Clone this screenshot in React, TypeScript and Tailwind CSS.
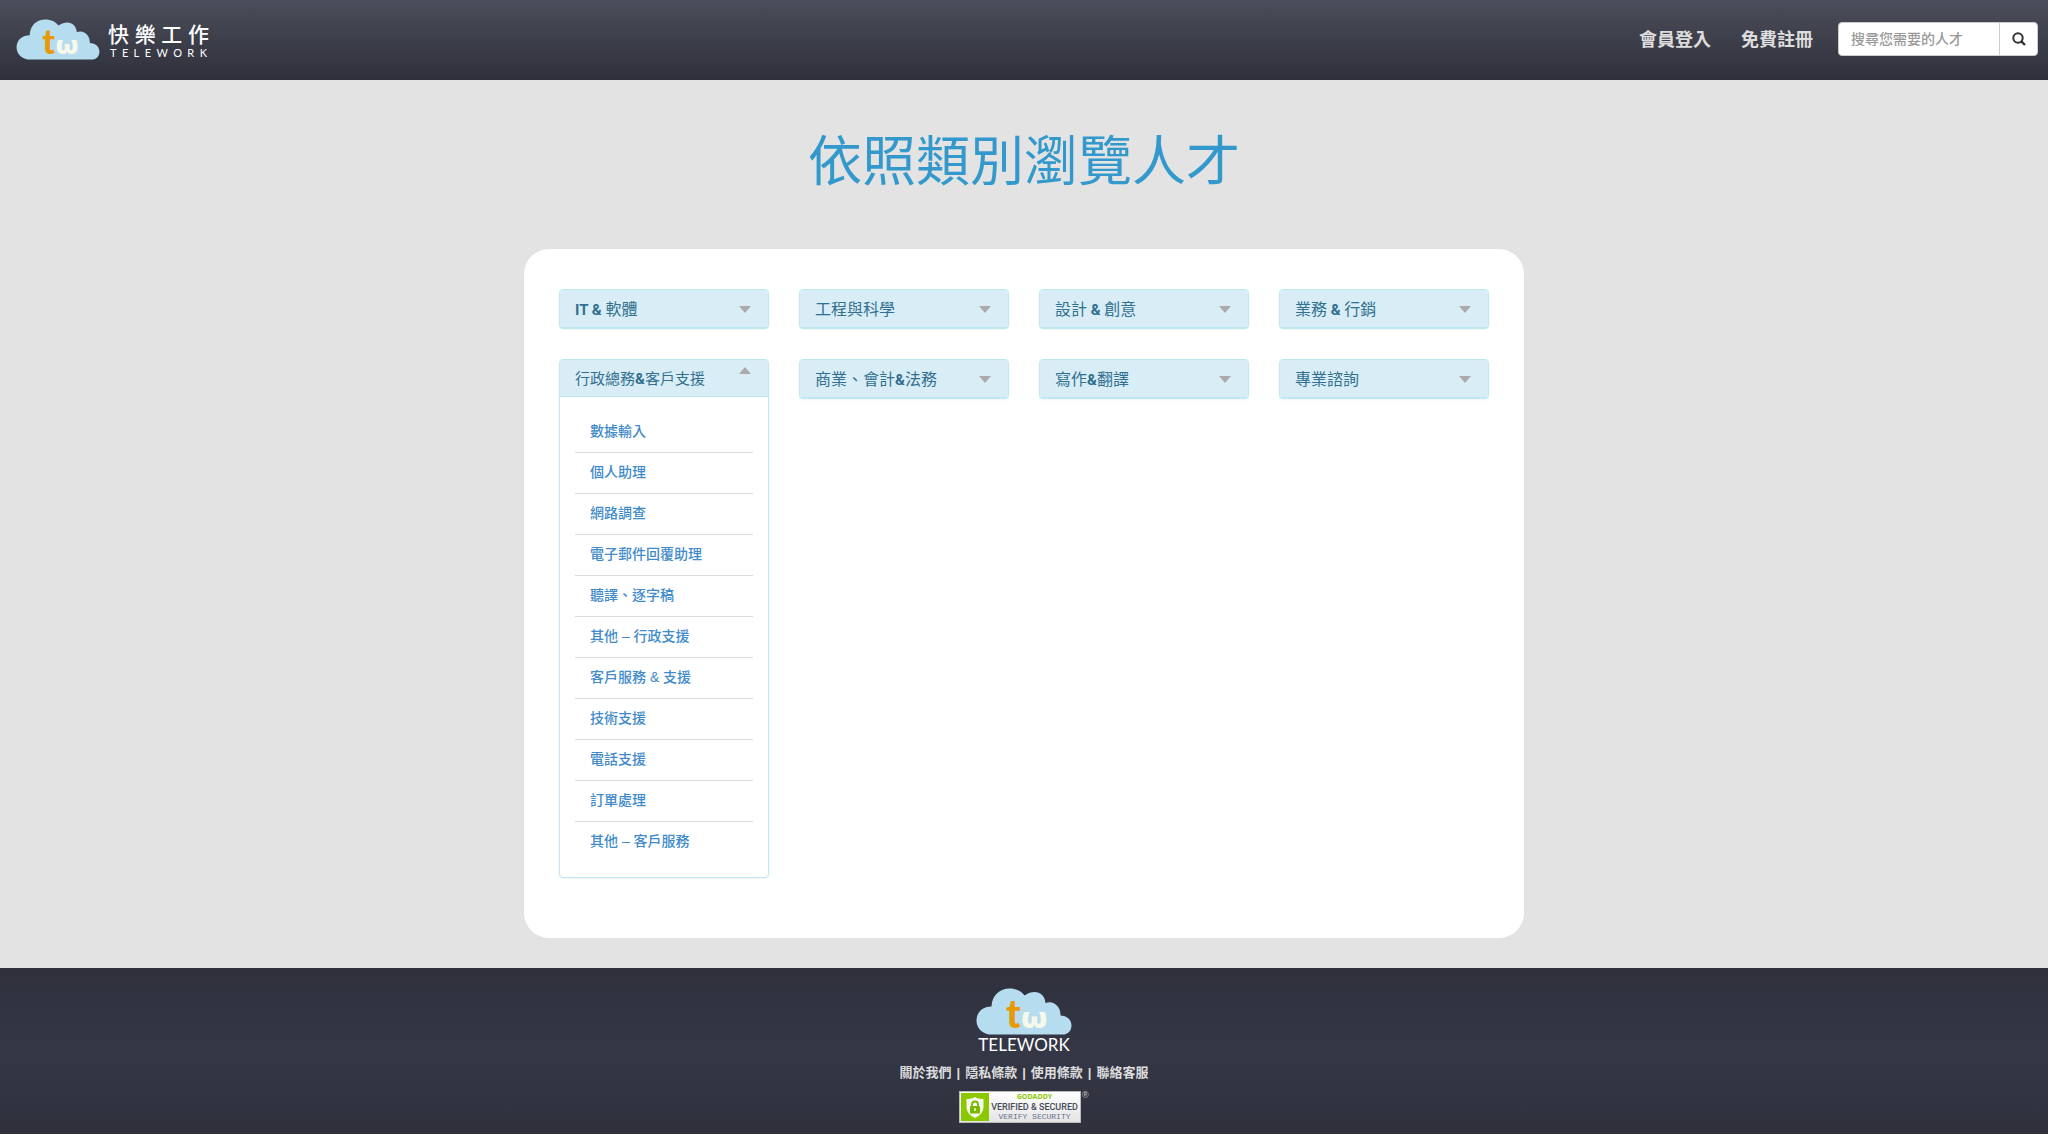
import { useState } from "react";

const font = "font-['Liberation_Sans','Noto_Sans_CJK_TC',sans-serif]";

const supportLinks = [
  "數據輸入", "個人助理", "網路調查", "電子郵件回覆助理", "聽譯、逐字稿", "其他 – 行政支援",
  "客戶服務 & 支援", "技術支援", "電話支援", "訂單處理", "其他 – 客戶服務",
];

const categories: { title: string; links: string[] }[] = [
  { title: "IT & 軟體", links: [] },
  { title: "工程與科學", links: [] },
  { title: "設計 & 創意", links: [] },
  { title: "業務 & 行銷", links: [] },
  { title: "行政總務&客戶支援", links: supportLinks },
  { title: "商業、會計&法務", links: [] },
  { title: "寫作&翻譯", links: [] },
  { title: "專業諮詢", links: [] },
];

function Cloud({ className }: { className: string }) {
  return (
    <svg viewBox="0 0 96 47" className={`overflow-visible ${className}`} role="img" aria-label="Telework">
      <path
        d="M13 46.500C5 45 0.500 39 0.500 32.500C0.500 24 7 18.500 15.500 18.500C16 7 24 0.500 33.500 0.500C40 0.500 45.500 3 48.500 7.500C59 0 69 5 69.500 15C78 12 85 19 84.500 27.500C91 27.500 95.500 32 95.500 37.500C95.500 42.500 92 46 88 46.500Z"
        fill="#b6dcf0"
      />
      <g fontWeight="900">
        <text x="30" y="40" fontSize="39" fill="#e89a06" fontFamily="Lato, sans-serif">t</text>
        <text x="45" y="40" fontSize="29" fill="#f6f9ea" fontFamily="'Open Sans', sans-serif">ω</text>
      </g>
    </svg>
  );
}

function Title({ text }: { text: string }) {
  return (
    <span className="leading-6">
      {text.split(/([A-Z& ]+)/).map((run, i) =>
        i % 2 ? <span key={i} className="font-[Roboto] text-[15px] font-bold">{run}</span> : run,
      )}
    </span>
  );
}

function CategoryPanel({ title, links, initiallyOpen }: { title: string; links: string[]; initiallyOpen: boolean }) {
  const [open, setOpen] = useState(initiallyOpen);
  return (
    <section className="overflow-hidden rounded border border-[#bce8f1] bg-white shadow-xs">
      <h2>
        <button
          type="button"
          aria-expanded={open}
          onClick={() => setOpen(!open)}
          className={`flex w-full justify-between border-b border-[#bce8f1] bg-[#d9edf7] pr-[17px] pl-[15px] whitespace-pre text-[#31708f] ${open ? "h-[37px] items-start pt-[7px] text-[15px]" : "h-[38px] items-center pt-0.5 text-base"}`}
        >
          <Title text={title} />
          <svg viewBox="0 0 12 7" className="h-[7px] w-3" aria-hidden="true">
            <path d={open ? "M0 7L6 0L12 7Z" : "M0 0H12L6 7Z"} fill="#aaa" />
          </svg>
        </button>
      </h2>
      {open && (
        <ul className="divide-y divide-[#ddd] p-[15px]">
          {links.map((link) => (
            <li key={link} className="px-[15px] pt-[9px] pb-[11px] text-sm leading-5 font-medium">
              <a href="#" className="text-[#428bca]">{link}</a>
            </li>
          ))}
        </ul>
      )}
    </section>
  );
}

function SecurityBadge() {
  return (
    <a href="#" className="mt-2 flex items-start" aria-label="GoDaddy Verified &amp; Secured, verify security">
      <span className="flex h-8 w-[122px] items-center border border-[#bbb] bg-linear-to-b from-white to-[#e4e4e4] pl-px">
        <svg viewBox="0 0 28 28" className="h-7 w-7" aria-hidden="true">
          <rect width="28" height="28" fill="#8cc800" />
          <path d="M14 4C11.500 5.500 9 6 5.500 6V14C5.500 19 9 22.500 14 25C19 22.500 22.500 19 22.500 14V6C19 6 16.500 5.500 14 4Z" fill="#f4f8ee" />
          <path d="M11 13V11.500A3 3 0 0 1 17 11.500V13" fill="none" stroke="#7ab800" strokeWidth="1.800" />
          <rect x="9" y="13" width="10" height="7.500" rx="1" fill="#7ab800" />
          <path d="M14 15V18" stroke="#f4f8ee" strokeWidth="1.500" />
        </svg>
        <span className="flex flex-1 flex-col items-center whitespace-nowrap">
          <span className="font-['Open_Sans'] text-[7px] leading-2 font-bold text-[#8cc800]">GODADDY</span>
          <span className="font-[Roboto] text-[9px] leading-3 font-medium text-[#444b55]">VERIFIED &amp; SECURED</span>
          <span className="font-['Liberation_Mono'] text-[8px] leading-2 text-[#66708c]">VERIFY SECURITY</span>
        </span>
      </span>
      <span className="w-2 pl-px text-[9px] leading-2 text-[#ccc]">®</span>
    </a>
  );
}

export default function App() {
  return (
    <div className={`flex min-h-screen flex-col bg-[#e3e3e3] ${font}`} lang="zh-Hant">
      <header className="flex h-20 items-center justify-between bg-linear-to-b from-[#4b4e5a] to-[#2f303c] pr-2.5 pb-0.5 pl-4">
        <a href="#" className="flex items-center gap-2">
          <Cloud className="h-[41px] w-[84px]" />
          <span className="flex w-[101px] flex-col pt-1 text-white">
            <span className="flex justify-between text-[21px] leading-6 font-medium">
              {[..."快樂工作"].map((c) => <span key={c}>{c}</span>)}
            </span>
            <span className="flex justify-between px-0.5 font-[Lato] text-[11px] leading-3">
              {[..."TELEWORK"].map((c, i) => <span key={i}>{c}</span>)}
            </span>
          </span>
        </a>
        <div className="flex items-center">
          <nav className="flex gap-[30px] pt-0.5 pr-[25px] text-lg font-bold text-[#ddd]">
            <a href="#">會員登入</a>
            <a href="#">免費註冊</a>
          </nav>
          <form className="flex h-[34px] w-[200px] overflow-hidden rounded border border-[#ccc] bg-white">
            <input aria-label="搜尋您需要的人才" placeholder="搜尋您需要的人才" className="min-w-0 flex-1 px-3 text-sm font-medium placeholder:text-[#999]" />
            <button type="button" aria-label="搜尋" className="flex w-[38px] items-center justify-center border-l border-[#ccc]">
              <svg viewBox="0 0 14 14" className="size-3.5" fill="none" stroke="#333" aria-hidden="true">
                <circle cx="6" cy="6" r="4.700" strokeWidth="2" />
                <path d="M9.300 9.300L13 13" strokeWidth="2.400" />
              </svg>
            </button>
          </form>
        </div>
      </header>

      <main className="flex-1 px-6 pb-[30px]">
        <h1 className="pt-[50px] text-center text-[54px] leading-16 text-[#3399cc]">依照類別瀏覽人才</h1>
        <div className="mx-auto mt-[55px] grid max-w-[1000px] grid-cols-4 items-start gap-[30px] rounded-[25px] bg-white px-[35px] pt-10 pb-[60px]">
          {categories.map((c, i) => (
            <CategoryPanel key={c.title} title={c.title} links={c.links} initiallyOpen={i === 4} />
          ))}
        </div>
      </main>

      <footer className="flex flex-col items-center bg-linear-to-b from-[#2f303c] via-[#343746] to-[#2f303c] pt-5 pb-[11px]">
        <Cloud className="h-[47px] w-24" />
        <p className="font-[Lato] text-[17px] leading-5 text-white">TELEWORK</p>
        <nav className="mt-2 flex gap-[5px] text-[13px] leading-5 font-bold text-[#ddd]">
          <a href="#">關於我們</a><span>|</span><a href="#">隱私條款</a><span>|</span>
          <a href="#">使用條款</a><span>|</span><a href="#">聯絡客服</a>
        </nav>
        <SecurityBadge />
      </footer>
    </div>
  );
}
